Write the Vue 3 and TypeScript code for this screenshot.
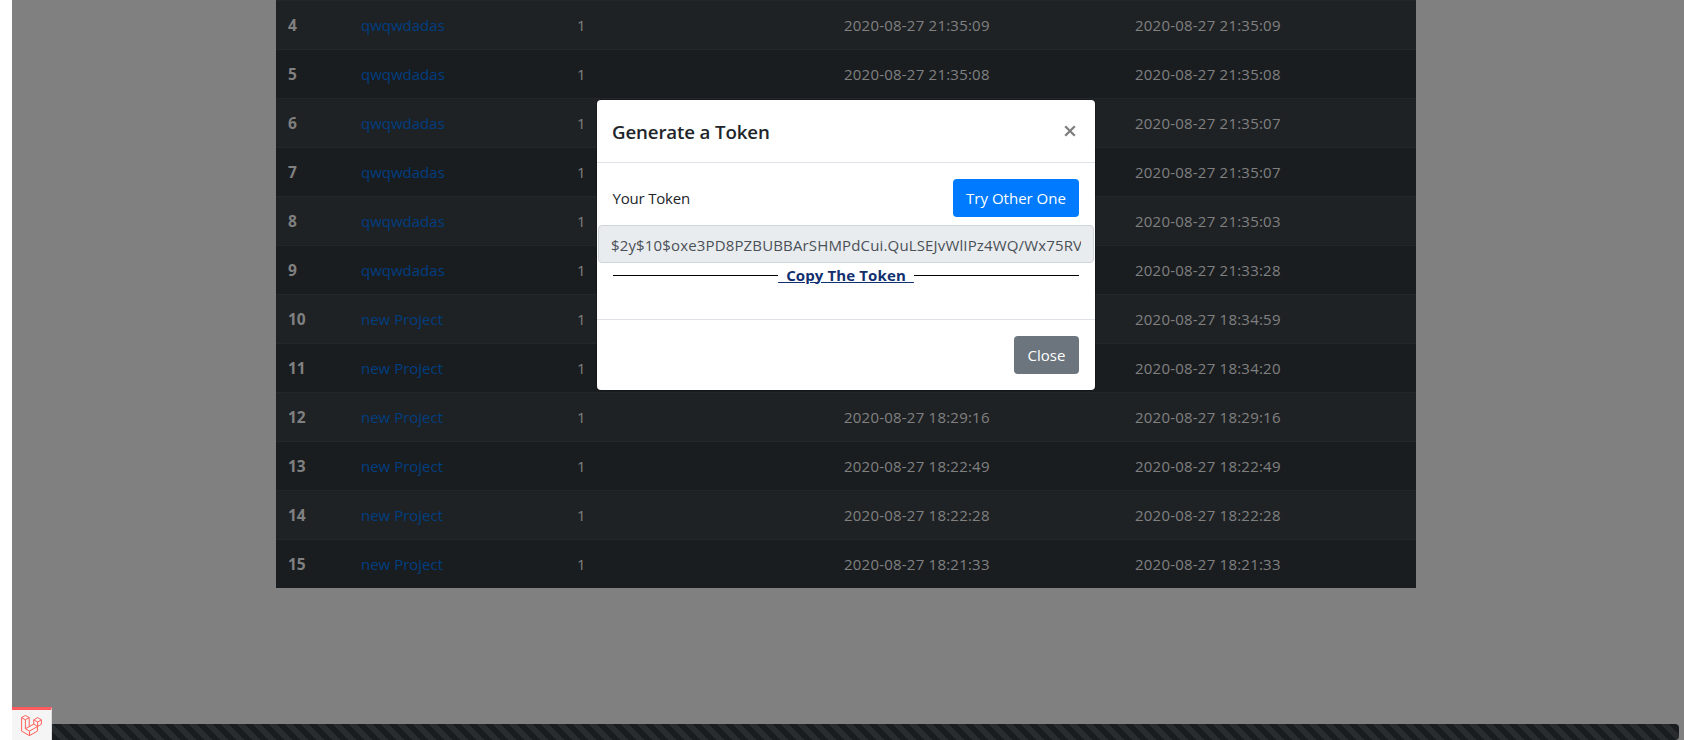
<script setup lang="ts">
interface Row {
  id: number
  name: string
  count: number
  created: string
  updated: string
}

const entries: [number, string, string][] = [
  [4, 'qwqwdadas', '21:35:09'],
  [5, 'qwqwdadas', '21:35:08'],
  [6, 'qwqwdadas', '21:35:07'],
  [7, 'qwqwdadas', '21:35:07'],
  [8, 'qwqwdadas', '21:35:03'],
  [9, 'qwqwdadas', '21:33:28'],
  [10, 'new Project', '18:34:59'],
  [11, 'new Project', '18:34:20'],
  [12, 'new Project', '18:29:16'],
  [13, 'new Project', '18:22:49'],
  [14, 'new Project', '18:22:28'],
  [15, 'new Project', '18:21:33'],
]

const rows: Row[] = entries.map(([id, name, time]) => ({
  id,
  name,
  count: 1,
  created: `2020-08-27 ${time}`,
  updated: `2020-08-27 ${time}`,
}))

const token = '$2y$10$oxe3PD8PZBUBBArSHMPdCui.QuLSEJvWlIPz4WQ/Wx75RV'
</script>

<template>
  <div class="page">
    <main class="table">
      <div v-for="row in rows" :key="row.id" class="row">
        <b class="id">{{ row.id }}</b>
        <a class="name">{{ row.name }}</a>
        <span>{{ row.count }}</span>
        <span class="date">{{ row.created }}</span>
        <span class="date">{{ row.updated }}</span>
      </div>
    </main>

    <div class="progress"></div>

    <div class="debugbar">
      <svg viewBox="0 0 24 24" width="21" height="21" fill="none" stroke="#ff5a52" stroke-width="1.1" stroke-linejoin="round">
        <path d="M.7 3 5 .5 9.4 3 5 5.5zM.7 3v15.4l9 5.2 9.1-5.2v-5.2M5 5.5v10.2l4.7 2.7v5.2M9.4 3v10.1M5 15.7l9.6-5.2M9.7 18.4l9.1-5.2M14.6 5.5 19 3l4.3 2.5L19 8zM14.6 5.5v5l4.4 2.6 4.3-2.6v-5M19 8v5.1" />
      </svg>
    </div>

    <section class="modal">
      <header class="head">
        <h5>Generate a Token</h5>
        <svg class="close" viewBox="0 0 12 12" width="12" height="12" stroke="#7f7f7f" stroke-width="2.3">
          <path d="M1.2 1.2 10.8 10.8M10.8 1.2 1.2 10.8" />
        </svg>
      </header>
      <div class="body">
        <div class="line">
          <span class="label">Your Token</span>
          <button class="btn primary">Try Other One</button>
        </div>
        <div class="field"><div class="clip">{{ token }}</div></div>
        <div class="divider"><i></i><a>&nbsp;&nbsp;Copy The Token&nbsp;&nbsp;</a><i></i></div>
      </div>
      <footer class="foot">
        <button class="btn secondary">Close</button>
      </footer>
    </section>
  </div>
</template>

<style>
body {
  margin: 0;
  overflow: hidden;
  background: #fff;
}
</style>

<style scoped>
* {
  box-sizing: border-box;
}
.page {
  position: relative;
  height: 740px;
  margin-left: 12px;
  background: #808080;
  font: 15px/24px "Open Sans", "Noto Sans", sans-serif;
  color: #212529;
  overflow: hidden;
}
.table {
  width: 1140px;
  margin-left: 264px;
  color: #808080;
}
.row {
  display: grid;
  grid-template-columns: 73px 216px 267px 291px 1fr;
  height: 49px;
  padding: 12px 0 12px 12px;
  border-top: 1px solid #23272b;
  background: #1a1d20;
}
.row:nth-child(odd) {
  background: #1f2225;
}
.id {
  font-size: 15.5px;
  font-weight: 700;
}
.name {
  color: #003e80;
}
.date {
  letter-spacing: 0.22px;
}
.progress {
  position: absolute;
  left: 0;
  top: 724px;
  width: 1667px;
  height: 16px;
  border-radius: 4px;
  background: linear-gradient(45deg, #292c2f 25%, transparent 25%, transparent 50%, #292c2f 50%, #292c2f 75%, transparent 75%) 0 0 / 16px 16px #1a1d20;
}
.debugbar {
  position: absolute;
  left: 0;
  top: 707px;
  width: 40px;
  height: 33px;
  border-top: 3px solid #ff5960;
  border-right: 1px solid #ddd;
  background: #f5f5f5;
  padding: 5px 0 0 9px;
}
.debugbar svg {
  display: block;
}
.modal {
  position: absolute;
  left: 585px;
  top: 100px;
  width: 498px;
  height: 290px;
  display: flex;
  flex-direction: column;
  background: #fff;
  border-radius: 4px;
  box-shadow: 0 0 0 1px rgba(0, 0, 0, 0.2);
}
.head {
  display: flex;
  justify-content: space-between;
  height: 63px;
  padding: 16px 16px 14px 15px;
  border-bottom: 1px solid #dee2e6;
}
h5 {
  margin: 0;
  font-size: 18.7px;
  line-height: 31px;
  font-weight: 600;
  letter-spacing: -0.14px;
}
.close {
  margin: 9px 3px 0 0;
}
.body {
  height: 156px;
  padding-top: 16px;
}
.line {
  display: flex;
  justify-content: space-between;
  align-items: center;
  padding: 0 16px 0 15.5px;
}
.label {
  letter-spacing: -0.2px;
}
.btn {
  height: 38px;
  padding: 0;
  border: 0;
  border-radius: 4px;
  font: inherit;
  color: #fff;
}
.primary {
  width: 126px;
  background: #007bff;
}
.secondary {
  width: 65px;
  background: #6c757d;
}
.field {
  height: 38px;
  margin: 8px 1px 0;
  padding: 7px 12px 5px;
  border: 1px solid #ced4da;
  border-radius: 4px;
  background: #e9ecef;
  color: #495057;
}
.clip {
  overflow: hidden;
  white-space: nowrap;
  letter-spacing: 0.15px;
}
.divider {
  display: flex;
  align-items: center;
  height: 24px;
  padding: 0 17px 0 16px;
}
.divider i {
  flex: 1;
  height: 1px;
  background: #000;
}
.divider i:last-child {
  margin-right: -1px;
}
.divider a {
  color: #12306f;
  font-weight: 700;
  letter-spacing: 0.12px;
  text-decoration: underline;
  text-decoration-thickness: 1px;
  text-underline-offset: 1px;
  white-space: nowrap;
}
.foot {
  display: flex;
  justify-content: flex-end;
  height: 71px;
  padding: 16px;
  border-top: 1px solid #dee2e6;
}
</style>
